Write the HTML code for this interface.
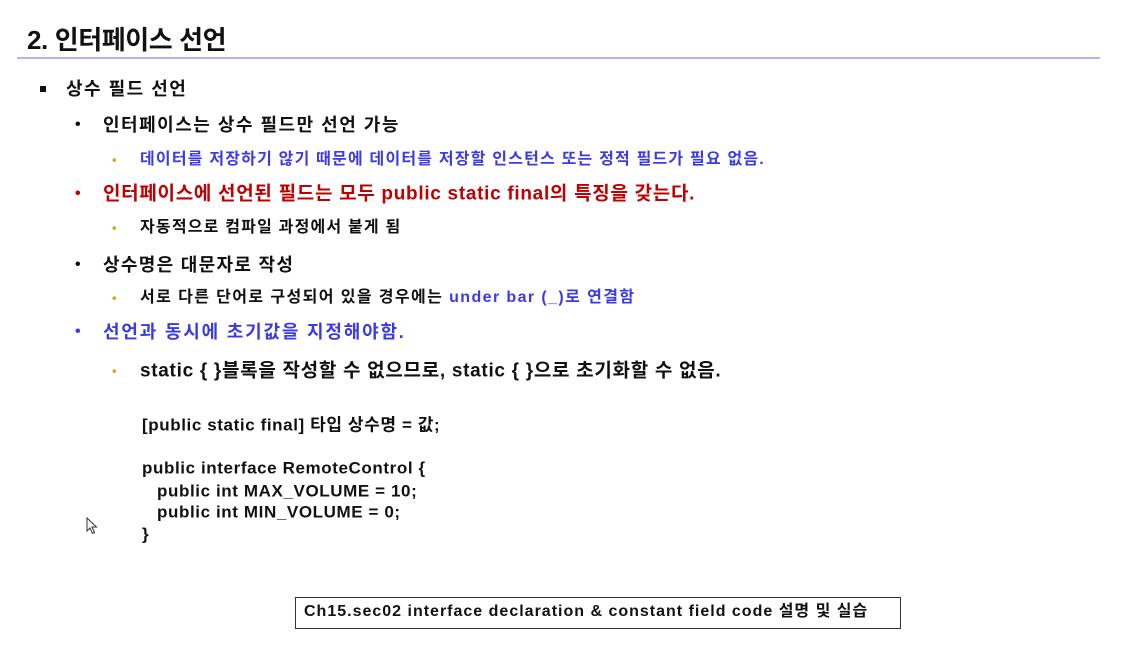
<!DOCTYPE html>
<html><head><meta charset="utf-8"><style>
body{margin:0;width:1145px;height:661px;background:#fff;position:relative;overflow:hidden;font-family:"Liberation Sans","Noto Sans CJK KR",sans-serif;color:#111;font-weight:bold}
.t{position:absolute;white-space:nowrap;line-height:1;transform:translateY(-50%)}
.b{position:absolute;line-height:1;transform:translateY(-50%)}
.blue{color:#3b3be6}.red{color:#c00000}
.y{color:#d9a520}
</style></head><body>
<div class="t" style="left:27px;top:40px;font-size:26px;letter-spacing:-0.4px">2. 인터페이스 선언</div>
<div style="position:absolute;left:17px;top:57px;width:1083px;height:2px;background:#b4b4ec"></div>

<div style="position:absolute;left:40px;top:86px;width:6px;height:6px;background:#111"></div>
<div class="t" style="left:66px;top:89px;font-size:18px;letter-spacing:1.5px">상수 필드 선언</div>

<div class="b" style="left:75px;top:125px;font-size:16px">•</div>
<div class="t" style="left:103px;top:125px;font-size:18px;letter-spacing:1.5px">인터페이스는 상수 필드만 선언 가능</div>

<div class="b y" style="left:112px;top:160px;font-size:13px">•</div>
<div class="t blue" style="left:140px;top:160px;font-size:16px;letter-spacing:1.2px">데이터를 저장하기 않기 때문에 데이터를 저장할 인스턴스 또는 정적 필드가 필요 없음.</div>

<div class="b red" style="left:75px;top:194px;font-size:16px">•</div>
<div class="t red" style="left:103px;top:194px;font-size:19px;letter-spacing:0.7px">인터페이스에 선언된 필드는 모두 public static final의 특징을 갖는다.</div>

<div class="b y" style="left:112px;top:228px;font-size:13px">•</div>
<div class="t" style="left:140px;top:228px;font-size:16px;letter-spacing:1.2px">자동적으로 컴파일 과정에서 붙게 됨</div>

<div class="b" style="left:75px;top:265px;font-size:16px">•</div>
<div class="t" style="left:103px;top:265px;font-size:18px;letter-spacing:1.3px">상수명은 대문자로 작성</div>

<div class="b y" style="left:112px;top:298px;font-size:13px">•</div>
<div class="t" style="left:140px;top:298px;font-size:16px;letter-spacing:1.4px">서로 다른 단어로 구성되어 있을 경우에는 <span class="blue">under bar (_)로 연결함</span></div>

<div class="b blue" style="left:75px;top:332px;font-size:16px">•</div>
<div class="t blue" style="left:103px;top:332px;font-size:18px;letter-spacing:1.8px">선언과 동시에 초기값을 지정해야함.</div>

<div class="b y" style="left:112px;top:371px;font-size:13px">•</div>
<div class="t" style="left:140px;top:371px;font-size:19px;letter-spacing:0.7px">static { }블록을 작성할 수 없으므로, static { }으로 초기화할 수 없음.</div>

<div class="t" style="left:142px;top:425px;font-size:17px;letter-spacing:0.6px">[public static final] 타입 상수명 = 값;</div>
<div class="t" style="left:142px;top:468px;font-size:17px;letter-spacing:0.6px">public interface RemoteControl {</div>
<div class="t" style="left:157px;top:491px;font-size:17px;letter-spacing:0.6px">public int MAX_VOLUME = 10;</div>
<div class="t" style="left:157px;top:512px;font-size:17px;letter-spacing:0.6px">public int MIN_VOLUME = 0;</div>
<div class="t" style="left:142px;top:534px;font-size:17px">}</div>

<svg style="position:absolute;left:86px;top:517px" width="12" height="18" viewBox="0 0 12 18"><path d="M1 1 L1 14 L4 11 L6.5 16.5 L8.5 15.5 L6 10 L10.5 10 Z" fill="#fff" stroke="#333" stroke-width="1"/></svg>

<div style="position:absolute;left:295px;top:597px;width:604px;height:30px;border:1px solid #333"></div>
<div class="t" style="left:304px;top:612px;font-size:16px;letter-spacing:1px">Ch15.sec02 interface declaration &amp; constant field code 설명 및 실습</div>
</body></html>
